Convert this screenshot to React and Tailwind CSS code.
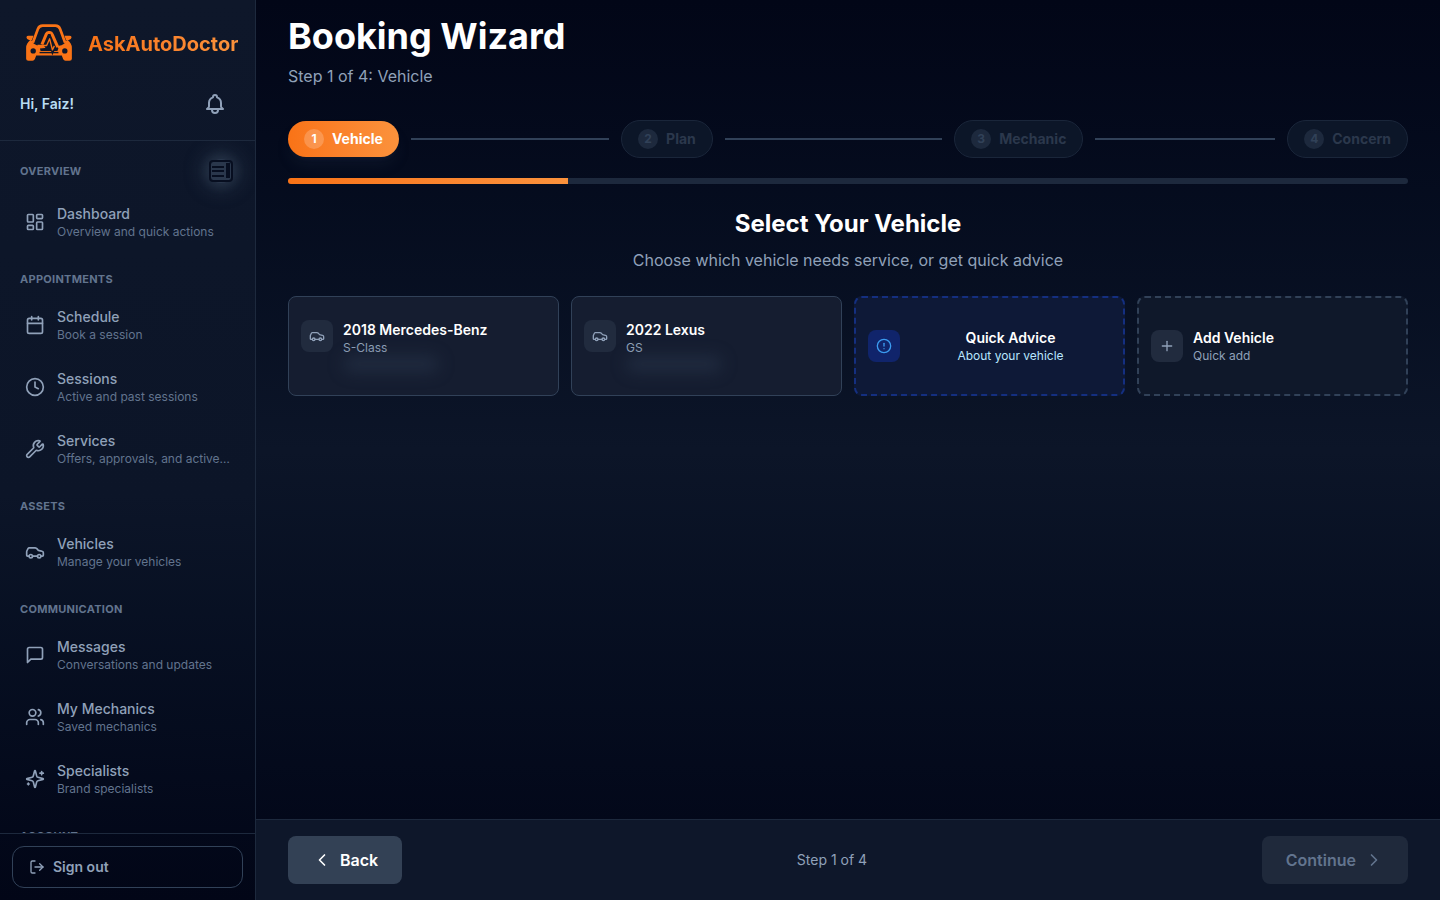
import { Calendar, Car, ChevronLeft, ChevronRight, CircleAlert, Clock, LayoutDashboard, LogOut, Plus, Users, Wrench } from "lucide-react";
import { HiOutlineBell } from "react-icons/hi";

const MessageIcon = ({ size = 24 }) => (
    <svg width={size} height={size} viewBox="0 0 24 24" fill="none" stroke="currentColor" strokeWidth="2" strokeLinecap="round" strokeLinejoin="round">
        <path d="M21 15a2 2 0 0 1-2 2H7l-4 4V5a2 2 0 0 1 2-2h14a2 2 0 0 1 2 2z" />
    </svg>
);

const SparklesIcon = ({ size = 24 }) => (
    <svg width={size} height={size} viewBox="0 0 24 24" fill="none" stroke="currentColor" strokeWidth="2" strokeLinecap="round" strokeLinejoin="round">
        <path d="M9.937 15.5A2 2 0 0 0 8.5 14.063l-6.135-1.582a.5.5 0 0 1 0-.962L8.5 9.936A2 2 0 0 0 9.937 8.5l1.582-6.135a.5.5 0 0 1 .963 0L14.063 8.5A2 2 0 0 0 15.5 9.937l6.135 1.581a.5.5 0 0 1 0 .964L15.5 14.063a2 2 0 0 0-1.437 1.437l-1.582 6.135a.5.5 0 0 1-.963 0z" />
        <path d="M20 3v4M22 5h-4M4 17v2M5 18H3" />
    </svg>
);

const Logo = () => (
    <svg width="46" height="37" viewBox="78 71 136 110" fill="none" aria-hidden="true">
        {/* roof and pillars */}
        <path d="M98 127L113 86Q117 76 127 76H165Q175 76 179 86L194 127" stroke="#f97316" strokeWidth="8" />
        {/* mirrors */}
        <path d="M79 110Q80 106 85 106H100L95 119H88Q79 117 79 110ZM213 110Q212 106 207 106H192L197 119H204Q213 117 213 110Z" fill="#f97316" />
        {/* body */}
        <path d="M92 118L101 130Q109 136 120 136H138L134 142L119 144L121 151H171L174 144L168 136Q184 137 191 130L200 118Q214 128 214 142V174Q214 180 207 180H195Q190 180 188 175L184 165H108L104 175Q102 180 97 180H85Q78 180 78 174V142Q78 128 92 118Z" fill="#f97316" />
        <circle cx="99" cy="151" r="8" fill="#0f172a" />
        <circle cx="193" cy="151" r="8" fill="#0f172a" />
        <path d="M118 156H174" stroke="#0f172a" strokeWidth="4" />
        {/* A with the pulse line */}
        <path d="M125 132L138 101Q140 96 144 96H149Q153 96 155 101L172 140" stroke="#f97316" strokeWidth="9" />
        <path d="M136 140L148 114L157 150L163 137" stroke="#0f172a" strokeWidth="10" />
        <path d="M112 135H139L148 115L156 148L162 136" stroke="#f97316" strokeWidth="4" strokeLinejoin="round" />
    </svg>
);

const navSections = [
    {
        title: "Overview",
        items: [{ label: "Dashboard", desc: "Overview and quick actions", icon: <LayoutDashboard size={20} /> }],
    },
    {
        title: "Appointments",
        items: [
            { label: "Schedule", desc: "Book a session", icon: <Calendar size={20} /> },
            { label: "Sessions", desc: "Active and past sessions", icon: <Clock size={20} /> },
            { label: "Services", desc: "Offers, approvals, and active work", icon: <Wrench size={20} /> },
        ],
    },
    {
        title: "Assets",
        items: [{ label: "Vehicles", desc: "Manage your vehicles", icon: <Car size={20} /> }],
    },
    {
        title: "Communication",
        items: [
            { label: "Messages", desc: "Conversations and updates", icon: <MessageIcon size={20} /> },
            { label: "My Mechanics", desc: "Saved mechanics", icon: <Users size={20} /> },
            { label: "Specialists", desc: "Brand specialists", icon: <SparklesIcon size={20} /> },
        ],
    },
    { title: "Account", items: [] },
];

const steps = ["Vehicle", "Plan", "Mechanic", "Concern"];

const vehicles = [
    { name: "2018 Mercedes-Benz", model: "S-Class" },
    { name: "2022 Lexus", model: "GS" },
];

function Sidebar() {
    return (
        <aside className="w-64 shrink-0 flex flex-col border-r border-slate-800 bg-linear-to-b from-[#0e172a] via-[#0c1528] via-55% to-[#020617]">
            <div className="shrink-0 border-b border-slate-800 py-6">
                <div className="flex items-start gap-4 pl-[26px]">
                    <Logo />
                    <span className="text-xl leading-10 font-bold bg-linear-to-r from-[#f97316] to-[#fb923c] bg-clip-text text-transparent">AskAutoDoctor</span>
                </div>
                <div className="flex items-center justify-between pl-5 pr-7 mt-7">
                    <span className="text-sm font-semibold text-[#b8dcf2]">Hi, Faiz!</span>
                    <button aria-label="Notifications" className="text-slate-400">
                        <HiOutlineBell size={24} />
                    </button>
                </div>
            </div>

            <nav className="flex-1 min-h-0 overflow-hidden px-3 pt-[10px]">
                {navSections.map((section, i) => (
                    <div key={section.title}>
                        {i === 0 ? (
                            <div className="flex items-center justify-between h-10 pl-2 pr-[10px]">
                                <h2 className="text-[11px] leading-4 font-bold uppercase tracking-wide text-slate-500">{section.title}</h2>
                                <button aria-label="Collapse sidebar" className="w-6 h-6 rounded-full bg-[#2a374c] shadow-[0_0_8px_4px_rgba(51,65,85,0.4),0_0_16px_10px_rgba(51,65,85,0.4)]">
                                    <svg width="24" height="24" viewBox="0 0 24 24" fill="none" stroke="#070e20">
                                        <rect x="1" y="2" width="22" height="20" rx="3" strokeWidth="2" />
                                        <path d="M3 8h12M3 12h12M3 17h12" strokeWidth="2" />
                                        <path d="M19 4v15" strokeWidth="4" />
                                    </svg>
                                </button>
                            </div>
                        ) : (
                            <h2 className="mt-[18px] mb-[7px] px-2 text-[11px] leading-4 font-bold uppercase tracking-wide text-slate-500">{section.title}</h2>
                        )}
                        {section.items.map((item) => (
                            <a key={item.label} href="#" className="flex items-center gap-3 px-3 py-3 rounded-xl border border-transparent text-slate-400">
                                <span className="shrink-0">{item.icon}</span>
                                <span className="min-w-0">
                                    <span className="block text-sm font-medium">{item.label}</span>
                                    <span className="block truncate text-xs text-slate-500">{item.desc}</span>
                                </span>
                            </a>
                        ))}
                    </div>
                ))}
            </nav>

            <div className="shrink-0 border-t border-slate-800 p-3">
                <button className="w-full flex items-center gap-2 px-4 py-[10px] rounded-xl border border-slate-700 text-sm font-semibold text-slate-400">
                    <LogOut size={16} />
                    Sign out
                </button>
            </div>
        </aside>
    );
}

function Stepper() {
    return (
        <ol className="mt-8 flex items-center h-[38px]">
            {steps.map((step, i) => (
                <li key={step} className={i < steps.length - 1 ? "flex-1 flex items-center" : "flex items-center"}>
                    {i === 0 ? (
                        <button className="flex items-center gap-2 px-4 py-2 rounded-full bg-linear-to-r from-[#f97316] to-[#fb923c] text-sm font-bold text-white shadow-lg shadow-slate-700/20">
                            <span className="w-5 h-5 rounded-full bg-white/20 flex items-center justify-center text-xs font-bold">1</span>
                            {step}
                        </button>
                    ) : (
                        <button disabled className="flex items-center gap-2 px-4 py-2 rounded-full border border-[#1a263a] bg-[#0c1628] text-sm font-bold text-[#2b384c]">
                            <span className="w-5 h-5 rounded-full bg-slate-800 flex items-center justify-center text-xs font-bold text-slate-700">{i + 1}</span>
                            {step}
                        </button>
                    )}
                    {i < steps.length - 1 && <span className="flex-1 h-[2px] mx-3 bg-slate-700" />}
                </li>
            ))}
        </ol>
    );
}

export default function App() {
    return (
        <div className="h-screen flex overflow-hidden bg-slate-950 font-['Inter','Liberation_Sans',sans-serif]">
            <Sidebar />

            <div className="flex-1 min-w-0 flex flex-col bg-linear-to-b from-[#020617] via-[#0c1528] to-[#020617]">
                <main className="flex-1 min-h-0 overflow-hidden px-8 pt-4">
                    <h1 className="text-4xl font-bold text-white">Booking Wizard</h1>
                    <p className="mt-2 text-base text-slate-400">Step 1 of 4: Vehicle</p>

                    <Stepper />
                    <div className="mt-5 h-[6px] rounded-full bg-slate-800 overflow-hidden">
                        <div className="h-full w-1/4 bg-linear-to-r from-[#f97316] to-[#fb923c]" />
                    </div>

                    <div className="mt-6 text-center">
                        <h2 className="text-2xl font-bold text-white">Select Your Vehicle</h2>
                        <p className="mt-2 text-base text-slate-400">Choose which vehicle needs service, or get quick advice</p>
                    </div>

                    <div className="mt-6 grid grid-cols-4 gap-3">
                        {vehicles.map((v) => (
                            <button key={v.name} className="min-h-[100px] flex items-center p-3 rounded-lg border border-slate-700 bg-[#151d30] text-left">
                                <span className="flex items-start gap-[10px]">
                                    <span className="w-8 h-8 shrink-0 rounded-lg bg-[#212b3e] flex items-center justify-center text-slate-400">
                                        <Car size={16} />
                                    </span>
                                    <span>
                                        <span className="block text-sm font-semibold text-white">{v.name}</span>
                                        <span className="block text-xs text-slate-400">{v.model}</span>
                                        <span className="block w-24 h-4 rounded-full bg-slate-700/40 blur-sm" />
                                    </span>
                                </span>
                            </button>
                        ))}

                        <button className="min-h-[100px] flex items-center gap-[10px] p-3 rounded-lg border-2 border-dashed border-[#142f80] bg-[#0e1937]">
                            <span className="w-8 h-8 shrink-0 rounded-lg bg-[#10246b] flex items-center justify-center text-[#3b9bf0]">
                                <CircleAlert size={16} />
                            </span>
                            <span className="flex-1">
                                <span className="block text-sm font-semibold text-white">Quick Advice</span>
                                <span className="block text-xs text-sky-200">About your vehicle</span>
                            </span>
                        </button>

                        <button className="min-h-[100px] flex items-center gap-[10px] p-3 rounded-lg border-2 border-dashed border-slate-700 bg-[#0f182a] text-left">
                            <span className="w-8 h-8 shrink-0 rounded-lg bg-[#212b3e] flex items-center justify-center text-slate-400">
                                <Plus size={16} />
                            </span>
                            <span>
                                <span className="block text-sm font-semibold text-white">Add Vehicle</span>
                                <span className="block text-xs text-slate-400">Quick add</span>
                            </span>
                        </button>
                    </div>
                </main>

                <footer className="shrink-0 flex items-center justify-between px-8 py-4 border-t border-slate-800 bg-[#0e172a]">
                    <button className="flex items-center gap-2 px-6 py-3 rounded-lg bg-[#334155] font-semibold text-white">
                        <ChevronLeft size={20} />
                        Back
                    </button>
                    <span className="text-sm text-slate-400">Step 1 of 4</span>
                    <button disabled className="flex items-center gap-2 px-6 py-3 rounded-lg bg-[#1f293b] font-semibold text-slate-500">
                        Continue
                        <ChevronRight size={20} />
                    </button>
                </footer>
            </div>
        </div>
    );
}
